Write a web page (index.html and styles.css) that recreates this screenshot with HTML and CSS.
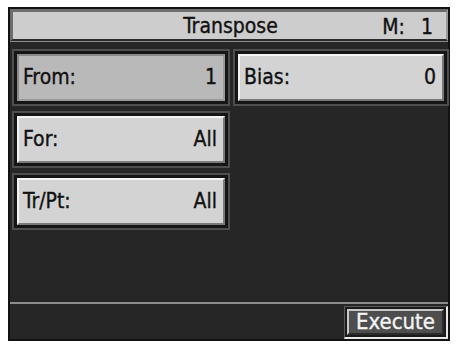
FILE: index.html
```html
<!DOCTYPE html>
<html>
<head>
<meta charset="utf-8">
<link rel="stylesheet" href="styles.css">
</head>
<body>
<div class="screen">
  <div class="title">
    <span class="title-text">Transpose</span>
    <span class="mode"><span class="m">M:</span><span class="mv">1</span></span>
  </div>
  <div class="main">
    <div class="frame"><div class="btn selected"><span>From:</span><span>1</span></div></div>
    <div class="frame"><div class="btn"><span>Bias:</span><span>0</span></div></div>
    <div class="frame"><div class="btn"><span>For:</span><span>All</span></div></div>
    <div class="empty"></div>
    <div class="frame"><div class="btn"><span>Tr/Pt:</span><span>All</span></div></div>
    <div class="empty"></div>
  </div>
  <div class="bottom">
    <div class="exec-frame"><div class="exec">Execute</div></div>
  </div>
</div>
</body>
</html>
```

FILE: styles.css
```css
html, body {
  margin: 0;
  padding: 0;
  background: #ffffff;
}
body {
  font-family: "DejaVu Sans Condensed", "DejaVu Sans", sans-serif;
  font-size: 21px;
  color: #111;
  -webkit-text-stroke: 0.35px currentColor;
}
.screen {
  margin: 7px 0 0 8px;
  width: 442px;
  height: 334px;
  box-sizing: border-box;
  background: #262626;
  border: 2px solid #121212;
  display: flex;
  flex-direction: column;
}
.title {
  height: 32px;
  box-sizing: border-box;
  background: #cdcdcd;
  border-style: solid;
  border-width: 3px 2px 2px 3px;
  border-color: #6d6d6d #9a9a9a #2a2a2a #6d6d6d;
  box-shadow: 0 1px 0 #8a8a8a;
  position: relative;
  display: flex;
  align-items: center;
  justify-content: center;
  line-height: 1;
}
.title-text {
  margin-left: 2px;
  padding-top: 1px;
}
.mode {
  position: absolute;
  right: 13px;
  top: 5px;
  display: flex;
}
.mv {
  margin-left: 16px;
}
.main {
  flex: 1;
  display: grid;
  grid-template-columns: 218px 216px;
  grid-template-rows: 57px 57px 57px;
  column-gap: 3px;
  row-gap: 5px;
  padding: 8px 0 0 2px;
}
.frame {
  border: 2px solid #4e4e4e;
  padding: 3px;
  background: #151515;
  display: flex;
}
.btn {
  flex: 1;
  display: flex;
  justify-content: space-between;
  align-items: center;
  background: #d3d3d3;
  border-style: solid;
  border-width: 2px;
  border-color: #f4f4f4 #7a7a7a #7a7a7a #f4f4f4;
  padding: 0 6px 0 4px;
  line-height: 1;
}
.btn.selected {
  background: #b9b9b9;
  border-color: #8a8a8a #9a9a9a #9a9a9a #8a8a8a;
}
.bottom {
  height: 37px;
  border-top: 2px solid #8c8c8c;
  display: flex;
  justify-content: flex-end;
  padding-top: 2px;
  box-sizing: border-box;
}
.exec-frame {
  width: 104px;
  box-sizing: border-box;
  border-style: solid;
  border-width: 1px 2px 2px 1px;
  border-color: #5a5a5a #e8e8e8 #e8e8e8 #5a5a5a;
  padding: 2px;
  background: #1a1a1a;
  display: flex;
}
.exec {
  flex: 1;
  background: #4e4e4e;
  color: #f4f4f4;
  border-style: solid;
  border-width: 2px;
  border-color: #c8c8c8 #2a2a2a #2a2a2a #c8c8c8;
  display: flex;
  align-items: center;
  justify-content: center;
  line-height: 1;
  font-size: 22px;
}
```
